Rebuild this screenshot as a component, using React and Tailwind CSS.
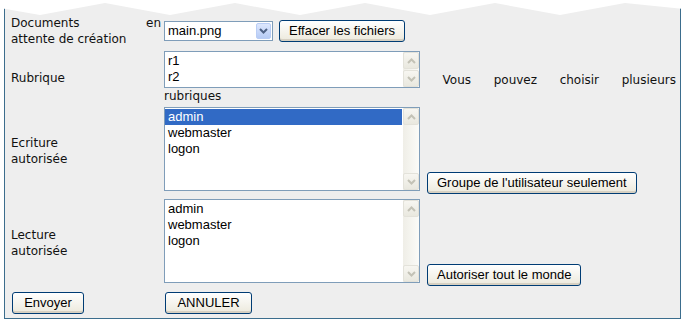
import React from "react";

// XP-ish widgets drawn with divs (native <select multiple> can't be styled like this)
const Chevron = ({ up, color = "#c3c2b6" }) => (
  <svg width="9" height="6" viewBox="0 0 9 6">
    <path
      d={up ? "M1 5 L4.5 1.5 L8 5" : "M1 1 L4.5 4.5 L8 1"}
      fill="none"
      stroke={color}
      strokeWidth="2"
    />
  </svg>
);

const ScrollBtn = ({ up }) => (
  <div className="h-[17px] w-[16px] flex items-center justify-center rounded-[2px] border border-[#e3e2da] bg-gradient-to-b from-[#f7f6f1] to-[#e9e8df]">
    <Chevron up={up} />
  </div>
);

const ListBox = ({ items, selected, height }) => (
  <div
    className={`flex w-[256px] shrink-0 border border-[#7f9db9] bg-white ${height}`}
  >
    <div className="flex-1 pt-[1px] pr-[1px]">
      {items.map((it) => (
        <div
          key={it}
          className={
            it === selected
              ? "h-[16px] leading-[16px] pl-[3px] bg-[#316ac5] text-white"
              : "h-[16px] leading-[16px] pl-[3px] text-black"
          }
        >
          {it}
        </div>
      ))}
    </div>
    <div className="w-[16px] flex flex-col justify-between bg-gradient-to-r from-[#efeee7] to-[#fbfbf8]">
      <ScrollBtn up />
      <ScrollBtn />
    </div>
  </div>
);

const XpButton = ({ children, className = "" }) => (
  <button
    type="button"
    className={`h-[22px] rounded-[3px] border border-[#003c74] bg-gradient-to-b from-white to-[#ece9dc] px-[9px] text-[13px] leading-[18px] text-black shadow-[inset_0_-2px_0_#d6d0c2] ${className}`}
  >
    {children}
  </button>
);

const Label = ({ children }) => (
  <div className="font-['DejaVu_Sans',Verdana,sans-serif] text-[12px] leading-[16px] text-[#111]">
    {children}
  </div>
);

export default function App() {
  return (
    <div className="relative w-[684px] h-[322px] bg-white font-['Liberation_Sans',Arial,sans-serif] text-[13px]">
      <div className="ml-[4px] w-[677px] h-[319px] border-l border-r border-b border-[#3b6d8d] bg-[#eeeeee] pl-[6px] pr-[4px] pt-[15px]">
        {/* documents */}
        <div className="grid grid-cols-[150px_1fr] gap-x-[3px] items-center">
          <Label>
            <div className="flex justify-between">
              <span>Documents</span>
              <span>en</span>
            </div>
            <div>attente de création</div>
          </Label>
          <div className="flex items-center gap-[6px]">
            <div className="flex items-center w-[109px] h-[20px] border border-[#7f9db9] bg-white pl-[3px]">
              <span className="flex-1 leading-[18px]">main.png</span>
              <div className="mr-[1px] h-[16px] w-[15px] flex items-center justify-center rounded-[2px] border border-[#b9cdf5] bg-gradient-to-b from-[#dde7fd] to-[#b6cbf5]">
                <Chevron color="#4d6185" />
              </div>
            </div>
            <XpButton>Effacer les fichiers</XpButton>
          </div>
        </div>

        {/* rubrique */}
        <div className="mt-[4px] grid grid-cols-[150px_1fr] gap-x-[3px] items-center">
          <Label>Rubrique</Label>
          <div className="font-['DejaVu_Sans',Verdana,sans-serif] text-[12px] leading-[16px] text-[#111]">
            <div className="flex items-end justify-between font-['Liberation_Sans',Arial,sans-serif] text-[13px]">
              <ListBox items={["r1", "r2"]} height="h-[37px]" />
              <span className="font-['DejaVu_Sans',Verdana,sans-serif] text-[12px]">Vous</span>
              <span className="font-['DejaVu_Sans',Verdana,sans-serif] text-[12px]">pouvez</span>
              <span className="font-['DejaVu_Sans',Verdana,sans-serif] text-[12px]">choisir</span>
              <span className="font-['DejaVu_Sans',Verdana,sans-serif] text-[12px]">plusieurs</span>
            </div>
            <div>rubriques</div>
          </div>
        </div>

        {/* ecriture */}
        <div className="mt-[3px] grid grid-cols-[150px_1fr] gap-x-[3px] items-center">
          <Label>
            <div>Ecriture</div>
            <div>autorisée</div>
          </Label>
          <div className="flex items-end gap-[7px]">
            <div className="mb-[3px]">
              <ListBox
                items={["admin", "webmaster", "logon"]}
                selected="admin"
                height="h-[84px]"
              />
            </div>
            <XpButton>Groupe de l'utilisateur seulement</XpButton>
          </div>
        </div>

        {/* lecture */}
        <div className="mt-[5px] grid grid-cols-[150px_1fr] gap-x-[3px] items-center">
          <Label>
            <div>Lecture</div>
            <div>autorisée</div>
          </Label>
          <div className="flex items-end gap-[7px]">
            <div className="mb-[3px]">
              <ListBox items={["admin", "webmaster", "logon"]} height="h-[84px]" />
            </div>
            <XpButton>Autoriser tout le monde</XpButton>
          </div>
        </div>

        {/* submit */}
        <div className="mt-[6px] grid grid-cols-[150px_1fr] gap-x-[3px] items-center">
          <div>
            <XpButton className="ml-[1px] w-[72px] px-0">Envoyer</XpButton>
          </div>
          <div>
            <XpButton className="ml-[1px] w-[87px] px-0">ANNULER</XpButton>
          </div>
        </div>
      </div>

      {/* torn-paper top edge */}
      <svg
        className="absolute left-0 top-0"
        width="684"
        height="18"
        viewBox="0 0 684 18"
      >
        <polygon
          fill="#ffffff"
          points="0,0 684,0 684,9 625,3 560,15 495,3 430,15 365,3 300,15 235,3 170,15 105,3 40,15 0,8"
        />
      </svg>
    </div>
  );
}
